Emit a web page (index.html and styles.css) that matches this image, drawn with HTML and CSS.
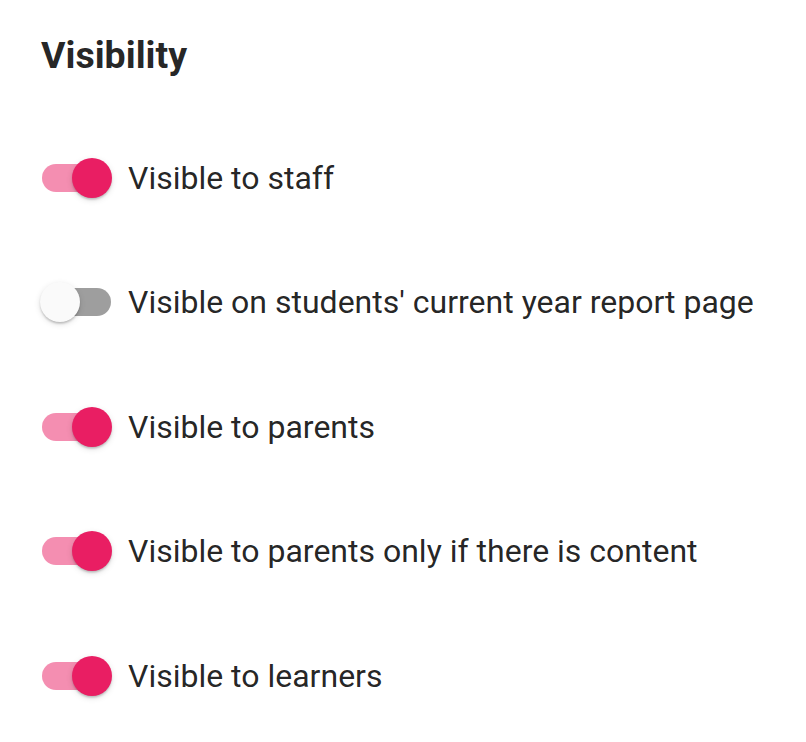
FILE: index.html
```html
<!DOCTYPE html>
<html lang="en">
<head>
<meta charset="utf-8">
<title>Visibility</title>
<link rel="stylesheet" href="styles.css">
</head>
<body>
<div class="panel">
  <h2 class="title">Visibility</h2>
  <div class="list">
    <label class="row">
      <span class="switch on"><span class="track"></span><span class="thumb"></span></span>
      <span class="label">Visible to staff</span>
    </label>
    <label class="row">
      <span class="switch"><span class="track"></span><span class="thumb"></span></span>
      <span class="label">Visible on students' current year report page</span>
    </label>
    <label class="row">
      <span class="switch on"><span class="track"></span><span class="thumb"></span></span>
      <span class="label">Visible to parents</span>
    </label>
    <label class="row">
      <span class="switch on"><span class="track"></span><span class="thumb"></span></span>
      <span class="label">Visible to parents only if there is content</span>
    </label>
    <label class="row">
      <span class="switch on"><span class="track"></span><span class="thumb"></span></span>
      <span class="label">Visible to learners</span>
    </label>
  </div>
</div>
</body>
</html>
```
FILE: styles.css
```css
html, body {
  margin: 0;
  padding: 0;
  background: #ffffff;
}
body {
  font-family: Roboto, "Liberation Sans", sans-serif;
  color: rgba(0, 0, 0, 0.87);
}
.panel {
  padding: 35px 0 0 40px;
}
.title {
  margin: 0;
  font-size: 37.5px;
  line-height: 40px;
  font-weight: 700;
  padding-left: 1px;
}
.list {
  display: flex;
  flex-direction: column;
  margin-top: 40.25px;
}
.row {
  display: flex;
  align-items: center;
  height: 124.5px;
  gap: 16px;
}
.switch {
  position: relative;
  flex: none;
  width: 72px;
  height: 40px;
}
.track {
  position: absolute;
  left: 2px;
  top: 6px;
  width: 69px;
  height: 28px;
  border-radius: 14px;
  background: #000;
  opacity: 0.38;
}
.thumb {
  position: absolute;
  left: 0;
  top: 0;
  width: 40px;
  height: 40px;
  border-radius: 50%;
  background: #fafafa;
  box-shadow: 0 2px 2px -2px rgba(0,0,0,0.2), 0 2px 2px 0 rgba(0,0,0,0.14), 0 2px 6px 0 rgba(0,0,0,0.12);
}
.switch.on .track {
  background: #e91e63;
  opacity: 0.5;
}
.switch.on .thumb {
  left: 32px;
  background: #e91e63;
}
.label {
  font-size: 32px;
  line-height: 40px;
}
```
